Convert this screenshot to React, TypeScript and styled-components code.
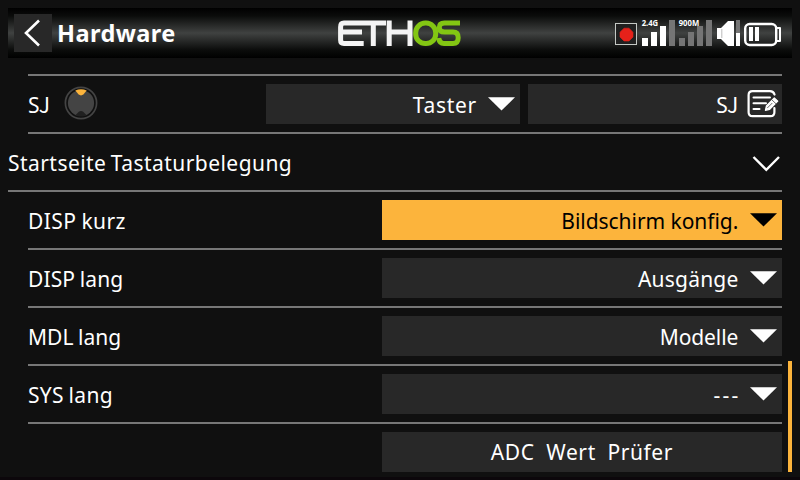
import React from "react";
import styled, { createGlobalStyle } from "styled-components";

const Global = createGlobalStyle`
  *, *::before, *::after { box-sizing: border-box; }
  html, body { margin: 0; padding: 0; background: #101010; }
`;

const Screen = styled.main`
  width: 800px;
  height: 480px;
  padding: 8px;
  overflow: hidden;
  display: flex;
  flex-direction: column;
  background: #101010;
  border-bottom: 3px solid #0c070b;
  color: #fff;
  font-family: "Noto Sans", sans-serif;
  font-size: 21px;
  line-height: 30px;
`;

const Header = styled.header`
  height: 50px;
  flex: none;
  display: grid;
  grid-template-columns: 38px 284px 1fr 178px;
  align-items: center;
  padding: 0 0 0 6px;
  background: linear-gradient(#000 0%, #0b0c0b 16%, #404241 50%, #0b0c0b 84%, #000 100%);
`;

const BackButton = styled.button`
  width: 38px;
  height: 38px;
  padding: 0;
  border: 0;
  background: #282828;
  display: block;
`;

const Title = styled.h1`
  margin: 0;
  padding-left: 5px;
  font-size: 23.5px;
  font-weight: 700;
  line-height: 32px;
  letter-spacing: 0.45px;
`;

const Body = styled.div`
  display: grid;
  grid-template-columns: 774px 4px;
  column-gap: 6px;
  padding-top: 16px;
`;

const List = styled.div`
  display: flex;
  flex-direction: column;
`;

const Row = styled.section`
  height: 58px;
  margin-left: 20px;
  border-top: 2px solid #777;
  display: flex;
  align-items: center;
  justify-content: space-between;
`;

const SectionRow = styled.section`
  height: 60px;
  margin-bottom: -2px;
  display: flex;
  align-items: center;
  justify-content: space-between;
  border-bottom: 2px solid #777;
  background: linear-gradient(#777, #777) 20px 0 / 100% 2px no-repeat;
`;

const PlainRow = styled(Row)<{ $first?: boolean }>`
  border-top-color: ${(p) => (p.$first ? "transparent" : "#777")};
`;

const Text = styled.span<{ $ls?: number; $ws?: number; $drop?: number }>`
  white-space: pre;
  letter-spacing: ${(p) => p.$ls ?? 0.7}px;
  word-spacing: ${(p) => p.$ws ?? 0}px;
  margin-right: ${(p) => 0.7 - (p.$ls ?? 0.7)}px;
  margin-top: ${(p) => p.$drop ?? 1}px;
`;

const FlatJ = styled.span`
  font-family: "Noto Sans CJK SC", sans-serif;
  line-height: 1;
  margin-left: -1px;
  margin-right: -3px;
`;

const Cluster = styled.div`
  display: flex;
  align-items: center;
  gap: 16px;

  svg { margin-bottom: 3px; }
`;

const Controls = styled.div`
  display: grid;
  grid-template-columns: 254px 254px;
  gap: 8px;
`;

const Field = styled.div<{ $active?: boolean; $center?: boolean; $pad?: number }>`
  width: ${(p) => (p.$pad === undefined ? "400px" : "auto")};
  height: 40px;
  padding-right: ${(p) => p.$pad ?? (p.$center ? 0 : 5)}px;
  display: flex;
  align-items: center;
  justify-content: ${(p) => (p.$center ? "center" : "flex-end")};
  gap: 11px;
  background: ${(p) => (p.$active ? "#fcb43c" : "#282828")};
  color: ${(p) => (p.$active ? "#000" : "#fff")};
`;

const Icon = styled.svg`
  display: block;
  flex: none;
`;

const SectionChevron = styled(Icon)`
  margin-top: 5px;
`;

const Scroll = styled.div`
  padding-top: 287px;
  height: 398px;
`;

const Thumb = styled.div`
  height: 111px;
  background: #fcb43c;
`;

const Badge = styled.text`
  font: 700 8px "Noto Sans", sans-serif;
  fill: #fff;
`;

const Arrow = () => (
  <Icon width="27" height="14" viewBox="0 0 27 14">
    <path d="M0 0.3H27L13.5 13.6Z" fill="currentColor" />
  </Icon>
);

const Logo = () => (
  <Icon width="126" height="30" viewBox="336 18 126 30" fill="none" strokeWidth="5">
    <path d="M386 23.1H344Q340.6 23.1 340.6 27V40Q340.6 43.4 344 43.4H363.7M340.6 32H362M373.3 23.4V46" stroke="#f4f4f4" />
    <path d="M389.2 20.6V46M410 20.6V46M389.2 32H410" stroke="#f4f4f4" />
    <rect x="415.7" y="23.1" width="20" height="20.4" rx="9.6" stroke="#83c613" />
    <path d="M460 23.1H444.5Q439.3 23.1 439.3 27.7Q439.3 32 444.5 32H453Q458.2 32 458.2 37.7Q458.2 43.4 453 43.4H444Q439.3 43.4 438.8 38" stroke="#83c613" />
  </Icon>
);

const Status = () => (
  <Icon width="170" height="30" viewBox="614 18 170 30">
    <rect x="615.5" y="23.5" width="21" height="21" fill="#202020" stroke="#c4c8c4" />
    <path d="M624 28.2H629L633 32.3V37L629 41H624L620 37V32.3Z" fill="#e5211a" stroke="#e5211a" strokeWidth="0.6" strokeLinejoin="round" />
    <path d="M642 38h6v8h-6zM651 32h6v14h-6zM660 26h6v20h-6z" fill="#fff" />
    <path d="M669 20h6v26h-6zM679 38h6v8h-6zM688 32h6v14h-6zM697 26h6v20h-6zM706 20h6v26h-6zM736 20h4v13h-4z" fill="#757575" />
    <Badge x="641.7" y="26.3" textLength="16.5" lengthAdjust="spacingAndGlyphs">2.4G</Badge>
    <Badge x="678.7" y="26.3" textLength="20.5" lengthAdjust="spacingAndGlyphs">900M</Badge>
    <path d="M717 28H721L728 21H734V46H728L721 39H717Z" fill="#fff" />
    <path d="M721.8 29V38" stroke="#aaa" strokeWidth="0.8" />
    <path d="M736 33h4v13h-4z" fill="#fff" />
    <rect x="745.2" y="24" width="31" height="21" rx="4.5" fill="none" stroke="#fff" strokeWidth="2.4" />
    <path d="M776.8 28H780V41H776.8" fill="none" stroke="#fff" strokeWidth="2" strokeLinejoin="round" />
    <path d="M749 27h4v14h-4zM755 27h4v14h-4z" fill="#fff" />
  </Icon>
);

const Knob = () => (
  <Icon width="34" height="34" viewBox="0 0 34 34">
    <circle cx="17" cy="17" r="15.6" fill="#101010" stroke="#444" strokeWidth="1.7" />
    <circle cx="17" cy="17" r="13.1" fill="#444" />
    <path d="M11.3 4.6Q17 2 22.7 4.6L19.4 8.6Q17 10.2 14.6 8.6Z" fill="#fcb43c" />
    <path d="M11.3 29.2L14.8 25.8Q17 24 19.2 25.8L22.7 29.2Q17 32 11.3 29.2Z" fill="#202020" />
  </Icon>
);

const Edit = () => (
  <Icon width="32" height="28" viewBox="747 90 32 28" fill="none" stroke="#fff" strokeLinecap="round">
    <path d="M774.5 94.5Q773.5 91.2 770 91.2H752.5Q748.6 91.2 748.6 95V112.3Q748.6 116.2 752.5 116.2H770.5Q774.4 116.2 774.4 112.3V108" strokeWidth="2.2" />
    <path d="M753.5 97.5H770M753.5 103.2H766M753.5 109H759.5" strokeWidth="2" />
    <path d="M765.4 110.3L766.4 106L774.3 98L777.8 101.2L769.7 109.3Z" fill="#fff" strokeWidth="1.2" strokeLinejoin="round" />
    <path d="M771.8 99.8L775.8 103.6M767.5 107.8L772 103.3" stroke="#444" strokeWidth="0.8" />
  </Icon>
);

type Spacing = { ls: number; ws?: number };
const keys: { label: string; l: Spacing; value: string; v: Spacing; active?: boolean }[] = [
  { label: "DISP kurz", l: { ls: 0.45, ws: -1 }, value: "Bildschirm konfig.", v: { ls: -0.05, ws: 0 }, active: true },
  { label: "DISP lang", l: { ls: 0.1, ws: -0.8 }, value: "Ausgänge", v: { ls: 0.2 } },
  { label: "MDL lang", l: { ls: 0, ws: -0.8 }, value: "Modelle", v: { ls: -0.1 } },
  { label: "SYS lang", l: { ls: 0.3, ws: -1 }, value: "---", v: { ls: 2.2 } },
];

const SJ = () => (
  <Text $ls={0.3}>S<FlatJ>J</FlatJ></Text>
);

export default function App() {
  return (
    <>
      <Global />
      <Screen>
        <Header>
          <BackButton aria-label="Zurück">
            <Icon width="38" height="38" viewBox="0 0 38 38" fill="none">
              <path d="M25 6.5L12 19L25 31.5" stroke="#fff" strokeWidth="2.6" />
            </Icon>
          </BackButton>
          <Title>Hardware</Title>
          <Logo />
          <Status />
        </Header>
        <Body>
          <List>
            <Row>
              <Cluster><SJ /><Knob /></Cluster>
              <Controls>
                <Field $pad={5}><Text>Taster</Text><Arrow /></Field>
                <Field $pad={3}><SJ /><Edit /></Field>
              </Controls>
            </Row>
            <SectionRow>
              <Text $ls={0.45} $ws={-1.5} $drop={3}>Startseite Tastaturbelegung</Text>
              <SectionChevron width="30" height="18" viewBox="0 0 30 18" fill="none">
                <path d="M1.5 2L14.3 14.8L27 2" stroke="#fff" strokeWidth="2.4" />
              </SectionChevron>
            </SectionRow>
            {keys.map((k, i) => (
              <PlainRow key={k.label} $first={i === 0}>
                <Text $ls={k.l.ls} $ws={k.l.ws}>{k.label}</Text>
                <Field $active={k.active}>
                  <Text $ls={k.v.ls} $ws={k.v.ws}>{k.value}</Text>
                  <Arrow />
                </Field>
              </PlainRow>
            ))}
            <Row>
              <span />
              <Field $center><Text $ls={0.6} $ws={5.5} $drop={0}>ADC Wert Prüfer</Text></Field>
            </Row>
          </List>
          <Scroll><Thumb /></Scroll>
        </Body>
      </Screen>
    </>
  );
}
